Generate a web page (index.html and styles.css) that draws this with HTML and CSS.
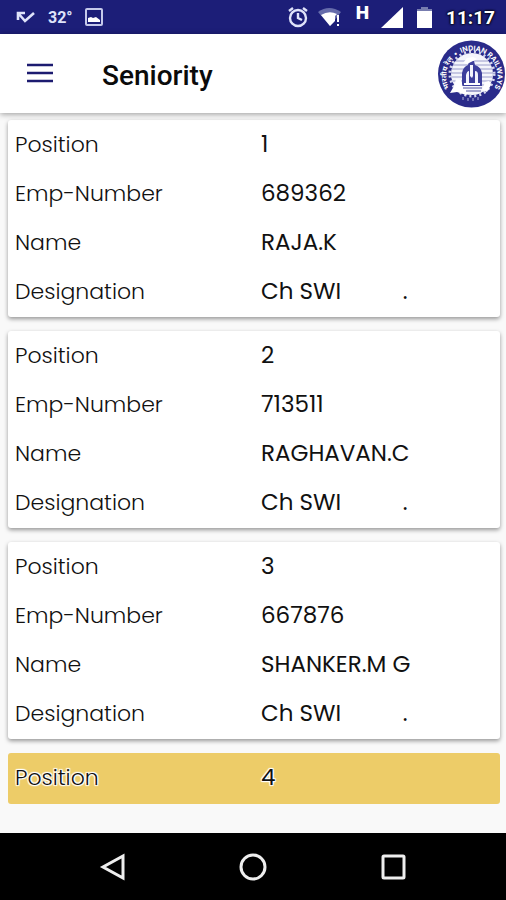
FILE: index.html
```html
<!DOCTYPE html>
<html lang="en">
<head>
<meta charset="utf-8">
<meta name="viewport" content="width=device-width, initial-scale=1">
<title>Seniority</title>
<link rel="stylesheet" href="styles.css">
</head>
<body>
<div class="status">
  <svg class="missed" width="20" height="14" viewBox="0 0 20 14" fill="none" stroke="#dfe3fa" stroke-width="2.6"><path d="M2 10V3h7M2 3l7 8 9-8"/></svg>
  <span class="temp">32°</span>
  <svg class="photo" width="18" height="18" viewBox="0 0 18 18"><rect x="1" y="1" width="16" height="16" rx="1" fill="none" stroke="#c5c9ea" stroke-width="2"/><path d="M3 14v-4l3-1 2 1 3-1 4 3v2z" fill="#fff"/></svg>
  <span class="spacer"></span>
  <svg width="22" height="22" viewBox="0 0 22 22" fill="none" stroke="#dfe3fa" stroke-width="2.4"><circle cx="11" cy="12" r="8"/><path d="M11 7v5l4 2M2 5l4-3M20 5l-4-3"/></svg>
  <svg class="wifi" width="24" height="20" viewBox="0 0 24 20"><path d="M0 5Q11-3 23 5L12 19z" fill="#666cab"/><path d="M3 8Q11 3 19 7l-2 2v5l-5 5z" fill="#fff"/><path d="M20 8v7M20 17v2" stroke="#fff" stroke-width="2"/></svg>
  <span class="network">H</span>
  <svg class="signal" width="22" height="21" viewBox="0 0 22 21"><path d="M0 21L22 0v21z" fill="#fff"/></svg>
  <svg class="battery" width="15" height="21" viewBox="0 0 15 21"><path d="M4 0h7v2h4v3H0V2h4z" fill="#777caf"/><path d="M0 4h15v17H0z" fill="#fff"/></svg>
  <time class="clock">11:17</time>
</div>
<header class="toolbar">
  <button class="menu" type="button" aria-label="Menu"><svg width="28" height="20" viewBox="0 0 28 20" stroke="#1c1b70" stroke-width="2.6"><path d="M1 2h26M1 10h26M1 18h26"/></svg></button>
  <h1>Seniority</h1>
  <svg class="logo" width="68" height="68" viewBox="0 0 68 68">
    <defs><path id="ring" d="M12.5 50A25.5 25.5 0 1 1 56.5 48"/></defs>
    <circle cx="33.5" cy="34" r="33.5" fill="#2a2b8a"/>
    <circle cx="34" cy="34" r="21" fill="#f4f5fb"/>
    <circle cx="34" cy="34" r="22" fill="none" stroke="#d5d7ed" stroke-width="3" stroke-dasharray="2 3"/>
    <path d="M18 21h32M15 25h38M14 29h40M13 33h42M14 37h40M15 41h38M18 45h32" stroke="#9a9ccb"/>
    <path d="M24 46V33q1-6 6-8l1-4h5l1 4q6 2 7 8v13z" fill="#3d3f9c"/>
    <path d="M28 43v-8q1-4 3-4v12zM37 43V31q3 0 3 4v8zM32 25h3v11l-1 2-2-2z" fill="#f3f4fc"/>
    <path d="M26 43h16v2H26z" fill="#fff"/>
    <path d="M25 23l4-5 6-1 4 2-4 2-6 3z" fill="#fff"/>
    <path d="M12 53l4-7 2-7 5 1 2 8 7 3-4 4-9-3zM44 50l3-8 4-1 2 4-4 7z" fill="#fff"/>
    <path d="M25 48h19M28 51h15" stroke="#5557a2"/>
    <path d="M25 57v3M30 58v3M35 58v3M40 57v3" stroke="#b5b7dc"/>
    <text class="ring-text"><textPath href="#ring" startOffset="2">भारतीय रेल&#160; • &#160;INDIAN RAILWAYS</textPath></text>
  </svg>
</header>
<main class="list">
  <dl class="card">
    <div><dt>Position</dt><dd>1</dd></div>
    <div><dt>Emp-Number</dt><dd>689362</dd></div>
    <div><dt>Name</dt><dd>RAJA.K</dd></div>
    <div><dt>Designation</dt><dd>Ch SWI          .</dd></div>
  </dl>
  <dl class="card">
    <div><dt>Position</dt><dd>2</dd></div>
    <div><dt>Emp-Number</dt><dd>713511</dd></div>
    <div><dt>Name</dt><dd>RAGHAVAN.C</dd></div>
    <div><dt>Designation</dt><dd>Ch SWI          .</dd></div>
  </dl>
  <dl class="card">
    <div><dt>Position</dt><dd>3</dd></div>
    <div><dt>Emp-Number</dt><dd>667876</dd></div>
    <div><dt>Name</dt><dd>SHANKER.M G</dd></div>
    <div><dt>Designation</dt><dd>Ch SWI          .</dd></div>
  </dl>
  <dl class="card current">
    <div><dt>Position</dt><dd>4</dd></div>
  </dl>
</main>
<nav class="navbar">
  <button type="button" aria-label="Back"><svg width="28" height="28" viewBox="0 0 28 28"><path d="M24 3v22L4 14z"/></svg></button>
  <button type="button" aria-label="Home"><svg width="28" height="28" viewBox="0 0 28 28"><circle cx="14" cy="14" r="12"/></svg></button>
  <button type="button" aria-label="Recent apps"><svg width="28" height="28" viewBox="0 0 28 28"><rect x="4" y="3" width="21" height="22" rx="1"/></svg></button>
</nav>
</body>
</html>
```
FILE: styles.css
```css
* { box-sizing: border-box; }
body {
  margin: 0;
  min-height: 100vh;
  display: flex;
  flex-direction: column;
  background: #f9f9f9;
  color: #111;
  font-family: Poppins, Inter, "Noto Sans", sans-serif;
}
svg { display: block; flex: none; }
button { border: 0; padding: 0; background: none; }
.status {
  display: flex;
  align-items: center;
  height: 34px;
  padding: 0 11px 0 16px;
  background: #1c1e78;
  color: #fff;
  font-family: Roboto, sans-serif;
}
.temp { margin: 0 12px; font-size: 16px; font-weight: 700; color: #dfe3fa; }
.spacer { flex: 1; }
.wifi { margin-left: 9px; }
.network { margin: 0 12px 0 14px; padding-bottom: 8px; font-size: 19px; line-height: 20px; font-weight: 900; }
.battery { margin: 0 14px; }
.clock {
  font-size: 19px;
  font-weight: 700;
  text-shadow: 0 0 2px #000, 0 0 2px #000, 0 0 3px #000;
}
.toolbar {
  position: relative;
  display: flex;
  align-items: center;
  height: 79px;
  padding-left: 26px;
  background: #fff;
  box-shadow: 0 1px 6px #0006;
}
.menu { margin-bottom: 2px; }
.toolbar h1 {
  flex: 1;
  margin: 4px 0 0 48px;
  font: 500 28px/32px Roboto, sans-serif;
  color: #0b0b0b;
}
.ring-text { font: 700 7px Inter, "Noto Sans", sans-serif; fill: #fff; }
.list {
  flex: 1;
  display: flex;
  flex-direction: column;
  gap: 14px;
  padding: 7px 6px 29px 8px;
}
.card {
  margin: 0;
  padding-bottom: 1px;
  border-radius: 3px;
  background: #fff;
  box-shadow: 0 2px 4px #0006;
}
.card div {
  display: grid;
  grid-template-columns: 1fr 1fr;
  padding: 0 7px;
  line-height: 49px;
}
.card dt { font-size: 22px; font-weight: 300; }
.card dd { margin: 0 0 0 7px; font-size: 23px; white-space: pre; }
.card.current {
  padding-bottom: 2px;
  background: #edcc68;
  box-shadow: none;
  text-shadow: 1px 1px 1px #fff, -1px -1px 1px #fff, 1px -1px 1px #fff, -1px 1px 1px #fff, 0 0 2px #fff;
}
.navbar {
  display: flex;
  justify-content: center;
  align-items: center;
  gap: 112px;
  height: 67px;
  background: #000;
}
.navbar svg { fill: none; stroke: #eee; stroke-width: 3; }
```
